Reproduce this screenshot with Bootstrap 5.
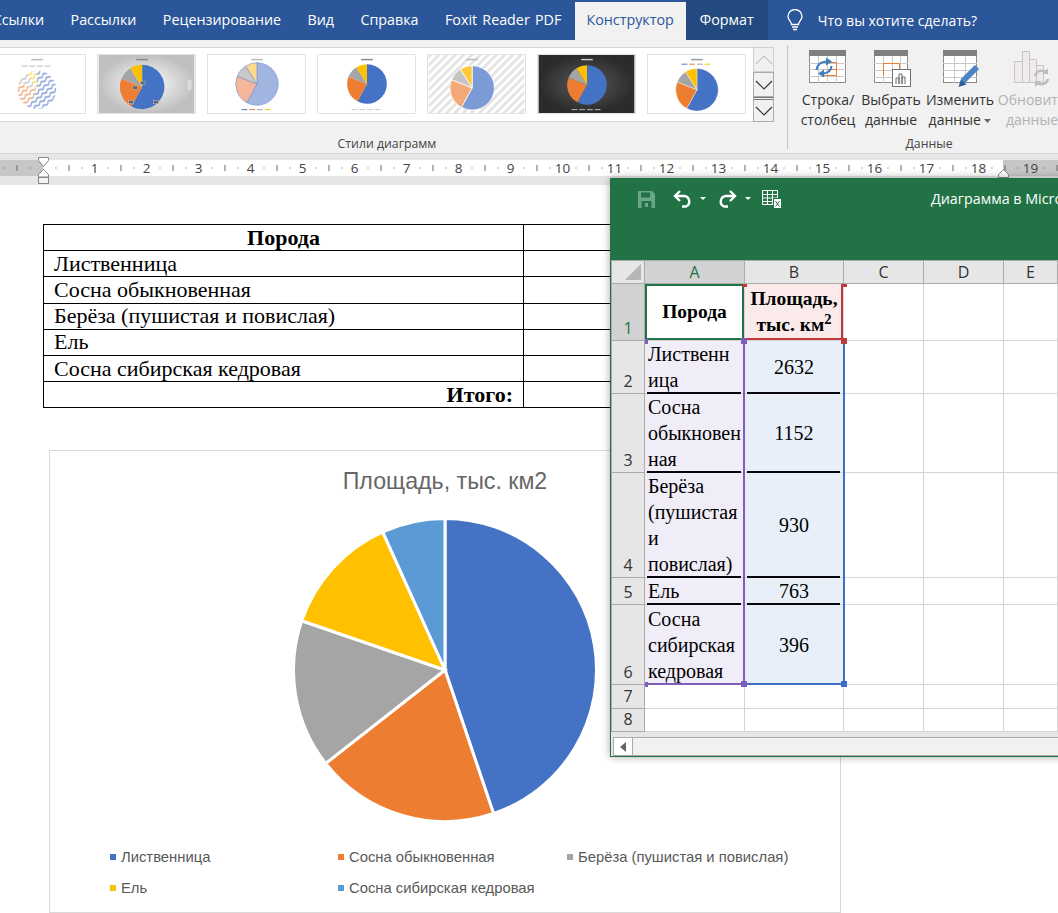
<!DOCTYPE html>
<html lang="ru">
<head>
    <meta charset="UTF-8">
    <title>Диаграмма</title>
    <link href="https://cdn.jsdelivr.net/npm/bootstrap@5.3.0/dist/css/bootstrap.min.css" rel="stylesheet">
    <style>
        body { background: #fff; font-family: "Open Sans", "Noto Sans", sans-serif; overflow: hidden; }
        .screen { position: relative; width: 1058px; height: 913px; overflow: hidden; }

        /* tabs */
        .tabbar { height: 40px; background: #2b579a; color: #fff; font-size: 14.3px; margin-left: -20.5px; width: 1079px; }
        .tab-item { padding: 0 13.2px; line-height: 40px; white-space: nowrap; }
        .tab-foxit { word-spacing: 1.5px; }
        .tab-active { background: #f1f1f1; color: #2b579a; padding: 0 12px; height: 38px; margin: 2px 0 0 0; line-height: 36px; }
        .tab-dark { background: #234a80; padding: 0 14px; }
        .tell-me { margin-left: 19px; gap: 15px; font-size: 14px; }

        /* ribbon */
        .ribbon { height: 114px; background: #f1f1f1; border-bottom: 1px solid #d4d4d4; }
        .gallery-wrap { width: 774px; position: relative; flex: none; }
        .gallery { height: 75px; margin: 7px 0 14px -13px; width: 766px; background: #fff; border-top: 1px solid #d4d4d4; border-bottom: 1px solid #d4d4d4; gap: 11px; }
        .thumb { width: 99px; height: 60px; flex: none; margin-top: 6px; border: 1px solid #e3e3e3; display: block; }
        .scroll-btns { position: absolute; left: 753px; top: 7px; width: 21px; height: 75px; }
        .scroll-btn { height: 25px; border: 1px solid #ababab; background: #f1f1f1; }
        .scroll-off { border-color: #d0d0d0; }
        .scroll-more { border-top: 3px double #777; }
        .group-label { font-size: 12.3px; color: #444; text-align: center; line-height: 16px; }
        .group-sep { width: 1px; background: #c6c6c6; margin: 5px 0 4px 13px; flex: none; }
        .data-group { padding-left: 9px; }
        .data-btn { text-align: center; font-size: 14px; line-height: 20px; color: #333; white-space: nowrap; flex: none; }
        .data-btn svg.btn-icon { display: block; margin: 10px auto 2px; }
        .btn-w1 { width: 62px; }
        .btn-w2 { width: 64px; }
        .btn-w3 { width: 74px; }
        .btn-w4 { width: 70px; }
        .data-off { color: #b1b1b1; }
        .data-caption { margin: 6px 0 0 -9px; width: 282px; }

        /* ruler */
        .ruler-band { height: 31px; background: #e6e6e6; }
        .ruler-band svg { display: block; font-family: "Open Sans", sans-serif; }

        /* document */
        .doc-table { width: 798px; margin: 39px 0 0 43px; border-collapse: collapse; table-layout: fixed; font-family: "Liberation Serif", serif; font-size: 22px; color: #000; }
        .doc-col { width: 480px; }
        .doc-table td { border: 1px solid #000; padding: 0 10px; height: 26.2px; line-height: 24px; }
        .chart-box { width: 792px; height: 463px; margin: 42px 0 0 49px; border: 1px solid #d9d9d9; font-family: "Liberation Sans", sans-serif; color: #595959; }
        .chart-title { font-size: 23.2px; line-height: 30px; padding-top: 15px; text-align: center; color: #666; }
        .pie-box { margin-top: 21px; }
        .pie-box svg { display: block; margin: 0 auto; }
        .legend-grid { display: grid; grid-template-columns: 228px 229px auto; row-gap: 11px; padding: 24px 0 0 60px; font-size: 14.8px; line-height: 20px; }
        .legend-key { width: 6px; height: 6px; display: inline-block; margin-right: 5px; vertical-align: 2px; }
        .key-1 { background: #4472c4; }
        .key-2 { background: #ed7d31; }
        .key-3 { background: #a5a5a5; }
        .key-4 { background: #ffc000; }
        .key-5 { background: #5b9bd5; }

        /* excel window */
        .excel-win { position: absolute; left: 610px; top: 178px; width: 470px; height: 579px; background: #e6e6e6; border: 1px solid #217346; box-shadow: 0 0 8px rgba(0,0,0,.35); }
        .excel-title { height: 81px; background: #217346; color: #fff; font-size: 14.3px; }
        .excel-qat { height: 40px; padding-left: 27px; }
        .qat-undo { margin-left: 18px; }
        .qat-redo { margin-left: 12px; }
        .qat-table { margin-left: 11px; }
        .excel-name { position: absolute; left: 320px; top: 9px; white-space: nowrap; }
        .sheet { border-collapse: collapse; table-layout: fixed; width: 446px; background: #fff; font-family: "Liberation Serif", serif; color: #000; font-size: 20px; line-height: 26px; white-space: nowrap; }
        .sheet td, .sheet th { border: 1px solid #d4d4d4; padding: 0 3px; }
        .sheet th { background: #e6e6e6; font-family: "Open Sans", sans-serif; font-weight: 400; color: #333; font-size: 16px; text-align: center; border-color: #ababab; line-height: 20px; }
        .col-h { width: 33px; }
        .col-a { width: 100px; }
        .col-b { width: 99px; }
        .col-std { width: 80px; }
        .col-e { width: 54px; }
        .row-head { height: 23px; }
        .row-1 { height: 57px; }
        .row-2 { height: 52px; }
        .row-3 { height: 79px; }
        .row-4 { height: 105px; }
        .row-5 { height: 27px; }
        .row-6 { height: 80px; }
        .row-7 { height: 24px; }
        .row-8 { height: 19px; }
        .sheet .corner { background: #e6e6e6; position: relative; }
        .corner-mark { position: absolute; right: 3px; bottom: 3px; width: 0; height: 0; border-style: solid; border-width: 0 0 16px 16px; border-color: transparent transparent #b5b5b5 transparent; }
        .sheet .col-on { background: #d2d2d2; color: #217346; }
        .sheet .row-on { background: #d2d2d2; color: #217346; }
        .sheet .row-num { vertical-align: bottom; padding: 0 0 2px; }
        .cell-name { background: #f1edf8; }
        .cell-val { background: #e8eff9; text-align: center; }
        .cell-head { text-align: center; font-weight: 700; font-size: 19.5px; position: relative; }
        .head-val { background: #faeae9; }
        .sel-green { box-shadow: inset 0 0 0 2px #217346; }
        .sel-red { box-shadow: inset -2px -2px 0 #c0393f; }
        .rule-under { position: relative; }
        .rule-under::after { content: ""; position: absolute; left: 2px; right: 3px; bottom: -1px; height: 2px; background: #06060c; }
        .sel-left, .sel-right { position: absolute; top: 162px; height: 344px; pointer-events: none; border-style: solid; border-width: 0 2px 2px 0; }
        .sel-left { left: 34px; width: 100px; border-color: #7f5dbb; }
        .sel-right { left: 134px; width: 100px; border-color: #3a6fc8; }
        .handle { position: absolute; width: 6px; height: 6px; }
        .h-purple { background: #7f5dbb; }
        .h-red { background: #c0393f; }
        .h-blue { background: #3a6fc8; }
        .h1 { left: 130px; top: 159px; }
        .h2 { left: 230px; top: 159px; }
        .h3 { left: 130px; top: 502px; }
        .h4 { left: 230px; top: 502px; }
        .h5 { left: 34px; top: 160px; width: 3px; height: 5px; }
        .h6 { left: 34px; top: 503px; width: 3px; height: 5px; }
        .h7 { left: 131px; top: 105px; height: 3px; width: 5px; }
        .h8 { left: 231px; top: 105px; height: 3px; width: 5px; }
        .h-scroll { height: 19px; margin: 5px 0 0 2px; background: #f1f1f1; border: 1px solid #ababab; }
        .h-scroll-btn { width: 19px; height: 17px; background: #fff; border-right: 1px solid #ababab; }
    </style>
</head>
<body>
<div class="screen">
    <!-- Вкладки -->
    <div class="tabbar d-flex">
        <div class="tab-item">Ссылки</div>
        <div class="tab-item">Рассылки</div>
        <div class="tab-item">Рецензирование</div>
        <div class="tab-item">Вид</div>
        <div class="tab-item">Справка</div>
        <div class="tab-item tab-foxit">Foxit Reader PDF</div>
        <div class="tab-item tab-active">Конструктор</div>
        <div class="tab-item tab-dark">Формат</div>
        <div class="d-flex align-items-center tell-me">
            <svg width="16" height="23" viewBox="0 0 16 23" fill="none" stroke="#fff" stroke-width="1.3"><path d="M4.500 15.500c0-3-3.500-4.500-3.500-8a7 7 0 0 1 14 0c0 3.500-3.500 5-3.500 8z"/><path d="M5 18h6M6 20.500h4"/></svg>
            <span>Что вы хотите сделать?</span>
        </div>
    </div>

    <!-- Лента -->
    <div class="ribbon d-flex">
        <div class="gallery-wrap">
            <div class="gallery d-flex" id="gallery"></div>
            <div class="scroll-btns">
                <div class="scroll-btn scroll-off d-flex align-items-center justify-content-center"><svg width="18" height="10" fill="none" stroke="#c4c4c4" stroke-width="1.2"><path d="M1 9l8-8 8 8"/></svg></div>
                <div class="scroll-btn d-flex align-items-center justify-content-center"><svg width="18" height="10" fill="none" stroke="#333" stroke-width="1.2"><path d="M1 1l8 8 8-8"/></svg></div>
                <div class="scroll-btn scroll-more d-flex align-items-center justify-content-center"><svg width="18" height="10" fill="none" stroke="#333" stroke-width="1.2"><path d="M1 1l8 8 8-8"/></svg></div>
            </div>
            <div class="group-label">Стили диаграмм</div>
        </div>
        <div class="group-sep"></div>
        <div class="data-group">
            <div class="d-flex">
                <div class="data-btn btn-w1">
                    <svg class="btn-icon" width="38" height="38" viewBox="0 0 38 38"><rect x=".5" y=".5" width="36" height="32" fill="#fff" stroke="#8a8a8a"/><rect width="37" height="6" fill="#7f7f7f"/><path d="M0 13.500h37M0 19.500h37M0 26.500h37M9.500 6v27M18.500 6v27M27.500 6v27" stroke="#c8c8c8" fill="none"/><path d="M13.500 12.500h14v13h-14M18.500 19.500h9" fill="none" stroke="#ed7d31"/><path d="M7.500 20c.5-5 4-8 9.500-8.500" fill="none" stroke="#3f7fbf" stroke-width="2.200"/><path d="M17 7.500l6 4-6 4z" fill="#3f7fbf"/><path d="M22.500 16c-.5 5-3.500 7-8 7.500" fill="none" stroke="#3f7fbf" stroke-width="2.200"/><path d="M15 19.500l-6 4 6 4z" fill="#3f7fbf"/></svg>
                    Строка/<br>столбец
                </div>
                <div class="data-btn btn-w2">
                    <svg class="btn-icon" width="40" height="38" viewBox="-3 0 40 38"><rect x=".5" y=".5" width="33" height="32" fill="#fff" stroke="#8a8a8a"/><rect width="34" height="6" fill="#7f7f7f"/><path d="M0 13.500h34M0 20.500h34M0 27.500h34M9.500 6v27M18.500 6v27M26.500 6v27" stroke="#c8c8c8" fill="none"/><path d="M9.500 25.500v-12h16v12" fill="none" stroke="#ed7d31"/><rect x="18.500" y="19.500" width="18" height="17" fill="#fff" stroke="#707070"/><path d="M22 34v-6h3v6M25 34v-10h3v10M28 34v-7h3v7" fill="#f4f4f4" stroke="#707070"/></svg>
                    Выбрать<br>данные
                </div>
                <div class="data-btn btn-w3">
                    <svg class="btn-icon" width="40" height="38" viewBox="-3 0 40 38"><rect x=".5" y=".5" width="33" height="32" fill="#fff" stroke="#8a8a8a"/><rect width="34" height="6" fill="#7f7f7f"/><path d="M0 13.500h34M0 20.500h34M0 27.500h34M11.500 6v27M22.500 6v27" stroke="#c8c8c8" fill="none"/><path d="M20 31L34 17" stroke="#4a86c5" stroke-width="6"/><path d="M15.500 37l2.500-8 5.500 5.500z" fill="#2e5f99"/></svg>
                    Изменить<br>данные <svg width="7" height="4"><path d="M0 0h7L3.500 4z" fill="#666"/></svg>
                </div>
                <div class="data-btn btn-w4 data-off">
                    <svg class="btn-icon" width="38" height="38" viewBox="0 0 38 38" fill="#efeaee" stroke="#c8c3c8"><path d="M1.500 11.500h8v21h-8zM9.500 1.500h7v31h-7zM16.500 9.500h7v23h-7zM23.500 15.500h7v17h-7z"/><path d="M22 26a7 7 0 0 1 12-3M35 29a7 7 0 0 1-12 3" fill="none" stroke="#bdbdbd" stroke-width="2.500"/><path d="M35 18v6h-6zM22 37v-6h6z" fill="#bdbdbd" stroke="none"/></svg>
                    Обновить<br>данные
                </div>
            </div>
            <div class="group-label data-caption">Данные</div>
        </div>
    </div>

    <!-- Линейка -->
    <div class="ruler-band"><svg id="ruler" width="1058" height="31"></svg></div>

    <!-- Документ -->
    <table class="doc-table">
        <colgroup><col class="doc-col"><col></colgroup>
        <tr><td class="text-center fw-bold">Порода</td><td></td></tr>
        <tr><td>Лиственница</td><td></td></tr>
        <tr><td>Сосна обыкновенная</td><td></td></tr>
        <tr><td>Берёза (пушистая и повислая)</td><td></td></tr>
        <tr><td>Ель</td><td></td></tr>
        <tr><td>Сосна сибирская кедровая</td><td></td></tr>
        <tr><td class="text-end fw-bold">Итого:</td><td></td></tr>
    </table>

    <div class="chart-box">
        <div class="chart-title">Площадь, тыс. км2</div>
        <div class="pie-box"><svg id="mainPie" width="306" height="306" viewBox="-153 -153 306 306"></svg></div>
        <div class="legend-grid">
            <div><span class="legend-key key-1"></span>Лиственница</div>
            <div><span class="legend-key key-2"></span>Сосна обыкновенная</div>
            <div><span class="legend-key key-3"></span>Берёза (пушистая и повислая)</div>
            <div><span class="legend-key key-4"></span>Ель</div>
            <div><span class="legend-key key-5"></span>Сосна сибирская кедровая</div>
        </div>
    </div>

    <!-- Окно Excel -->
    <div class="excel-win">
        <div class="excel-title position-relative">
            <div class="excel-qat d-flex align-items-center">
                <svg width="17" height="17" viewBox="0 0 17 17"><path d="M0 0h14l3 3v14H0z" fill="#6da78a"/><path d="M3 1.500h9v5H3zM3.500 10h10v7h-10z" fill="#217346"/><path d="M7 12h3v4H7z" fill="#6da78a"/></svg>
                <div class="qat-undo d-flex align-items-center gap-2">
                    <svg width="19" height="18" viewBox="0 0 19 18" fill="none" stroke="#fff" stroke-width="2.400"><path d="M7 1L2 6l5 5"/><path d="M2 6h9a5.500 5.500 0 0 1 2 10.500H9"/></svg>
                    <svg width="6" height="4"><path d="M0 0h6L3 3z" fill="#fff"/></svg>
                </div>
                <div class="qat-redo d-flex align-items-center gap-2">
                    <svg width="19" height="18" viewBox="0 0 19 18" fill="none" stroke="#fff" stroke-width="2.400"><path d="M12 1l5 5-5 5"/><path d="M17 6H8a5.500 5.500 0 0 0-2 10.500h4"/></svg>
                    <svg width="6" height="4"><path d="M0 0h6L3 3z" fill="#fff"/></svg>
                </div>
                <svg class="qat-table" width="20" height="19" viewBox="0 0 20 19" fill="none" stroke="#fff"><path d="M.5 .5h15v14H.5zM.5 4.500h15M.5 8h15M.5 11.500h15M5.500 .5v14M10.500 .5v14"/><rect x="11.500" y="8.500" width="8" height="10" fill="#fff" stroke="#217346"/><path d="M13.500 11l4 5.500M17.500 11l-4 5.500" stroke="#217346"/></svg>
            </div>
            <div class="excel-name">Диаграмма в Microsoft Excel</div>
        </div>
        <table class="sheet">
            <colgroup><col class="col-h"><col class="col-a"><col class="col-b"><col class="col-std"><col class="col-std"><col class="col-e"></colgroup>
            <tr class="row-head"><th class="corner"><span class="corner-mark"></span></th><th class="col-on">A</th><th>B</th><th>C</th><th>D</th><th>E</th></tr>
            <tr class="row-1"><th class="row-num row-on">1</th><td class="cell-head sel-green">Порода</td><td class="cell-head head-val sel-red">Площадь,<br>тыс. км<sup>2</sup></td><td></td><td></td><td></td></tr>
            <tr class="row-2"><th class="row-num">2</th><td class="cell-name rule-under">Лиственн<br>ица</td><td class="cell-val rule-under">2632</td><td></td><td></td><td></td></tr>
            <tr class="row-3"><th class="row-num">3</th><td class="cell-name rule-under">Сосна<br>обыкновен<br>ная</td><td class="cell-val rule-under">1152</td><td></td><td></td><td></td></tr>
            <tr class="row-4"><th class="row-num">4</th><td class="cell-name rule-under">Берёза<br>(пушистая<br>и<br>повислая)</td><td class="cell-val rule-under">930</td><td></td><td></td><td></td></tr>
            <tr class="row-5"><th class="row-num">5</th><td class="cell-name rule-under">Ель</td><td class="cell-val rule-under">763</td><td></td><td></td><td></td></tr>
            <tr class="row-6"><th class="row-num">6</th><td class="cell-name">Сосна<br>сибирская<br>кедровая</td><td class="cell-val">396</td><td></td><td></td><td></td></tr>
            <tr class="row-7"><th class="row-num">7</th><td></td><td></td><td></td><td></td><td></td></tr>
            <tr class="row-8"><th class="row-num">8</th><td></td><td></td><td></td><td></td><td></td></tr>
        </table>
        <div class="sel-left"></div>
        <div class="sel-right"></div>
        <div class="handle h-purple h1"></div>
        <div class="handle h-red h2"></div>
        <div class="handle h-purple h3"></div>
        <div class="handle h-blue h4"></div>
        <div class="handle h-purple h5"></div>
        <div class="handle h-purple h6"></div>
        <div class="handle h-red h7"></div>
        <div class="handle h-red h8"></div>
        <div class="h-scroll"><div class="h-scroll-btn d-flex align-items-center justify-content-center"><svg width="6" height="10"><path d="M6 0v10L0 5z" fill="#666"/></svg></div></div>
    </div>
</div>

<script>
    // Построение секторов круговой диаграммы
    function piePaths(values, colors, r, stroke, strokeWidth) {
        const total = values.reduce((a, b) => a + b, 0);
        let angle = 0;
        let out = '';
        values.forEach((v, i) => {
            const next = angle + v / total * Math.PI * 2;
            const x1 = r * Math.sin(angle), y1 = -r * Math.cos(angle);
            const x2 = r * Math.sin(next), y2 = -r * Math.cos(next);
            const large = next - angle > Math.PI ? 1 : 0;
            out += `<path d="M0 0L${x1.toFixed(2)} ${y1.toFixed(2)}A${r} ${r} 0 ${large} 1 ${x2.toFixed(2)} ${y2.toFixed(2)}Z" fill="${colors[i]}" stroke="${stroke}" stroke-width="${strokeWidth}"/>`;
            angle = next;
        });
        return out;
    }

    document.getElementById('mainPie').innerHTML = piePaths(
        [2632, 1152, 930, 763, 396],
        ['#4472c4', '#ed7d31', '#a5a5a5', '#ffc000', '#5b9bd5'], 151.5, '#fff', 3);

    // Миниатюры стилей
    const base = ['#4472c4', '#ed7d31', '#a5a5a5', '#ffc000'];
    const dots = (y, fill) => [0, 1, 2, 3].map(i => `<rect x="${34 + i * 8}" y="${y}" width="6" height="1" fill="${fill || base[i]}"/>`).join('');
    const boxes = [[12, 14], [-2, -6], [-14, 14], [-10, -1]].map(b => `<rect x="${b[0]}" y="${b[1]}" width="5" height="3.500" fill="#666" stroke="#ddd" stroke-width=".4"/>`).join('');
    const thumbs = [
        { bg: '#fff', colors: ['url(#waveBlue)', 'url(#waveOrange)', 'url(#waveGrey)', 'url(#waveYellow)'], r: 20, cx: 50, cy: 36, title: '#bbb', extra: dots(11, '#bbb') },
        { bg: 'url(#gradGrey)', colors: base, r: 23, cx: 45, cy: 33, title: '#888', inner: boxes, extra: '<rect x="92" y="26" width="4" height="10" fill="#ddd"/>' },
        { bg: '#fff', colors: ['#a2b5e0', '#f5b69b', '#c9c9c9', '#ffd98a'], stroke: '#6f8fd0', sw: .6, r: 22, cx: 50, cy: 30, title: '#bbb', extra: dots(56) },
        { bg: '#fff', colors: base, r: 20.500, cx: 50, cy: 30, title: '#888', extra: dots(56, '#ccc') },
        { bg: 'url(#hatch)', colors: ['#7b9bd6', '#f3a878', '#c4c4c4', '#ffc93c'], stroke: '#fff', sw: .8, r: 23, cx: 45, cy: 34, title: '#bbb', extra: '' },
        { bg: 'url(#gradDark)', colors: base, r: 20.500, cx: 50, cy: 31, title: '#ccc', extra: dots(56, '#bbb') },
        { bg: '#fff', colors: base, stroke: '#fff', sw: .4, r: 22, cx: 50, cy: 36, title: '#999', extra: dots(9) }
    ];
    const wave = (id, c) => `<pattern id="${id}" width="7" height="5" patternUnits="userSpaceOnUse" patternTransform="rotate(-40)"><rect width="7" height="5" fill="#fff"/><path d="M0 2.500q1.750-2 3.500 0t3.500 0" fill="none" stroke="${c}" stroke-width="1.600"/></pattern>`;
    const defs = `<defs>
        <radialGradient id="gradGrey"><stop offset="0" stop-color="#fff"/><stop offset="1" stop-color="#c0c0c0"/></radialGradient>
        <radialGradient id="gradDark"><stop offset="0" stop-color="#5a5a5a"/><stop offset="1" stop-color="#2b2b2b"/></radialGradient>
        <pattern id="hatch" width="6" height="6" patternUnits="userSpaceOnUse" patternTransform="rotate(45)"><rect width="6" height="6" fill="#fff"/><rect width="3" height="6" fill="#e4e4e4"/></pattern>
        ${wave('waveBlue', '#7f9ed8')}${wave('waveOrange', '#f2a878')}${wave('waveGrey', '#c4c4c4')}${wave('waveYellow', '#ffd45e')}
    </defs>`;
    document.getElementById('gallery').innerHTML = thumbs.map((t, i) =>
        `<svg class="thumb" viewBox="0 0 99 60">${i === 0 ? defs : ''}<rect width="99" height="60" fill="${t.bg}"/>` +
        `<rect x="${t.cx - 6}" y="4" width="12" height="1.500" fill="${t.title}"/>${t.extra}` +
        `<g transform="translate(${t.cx} ${t.cy})">${piePaths([58, 23, 10, 9], t.colors, t.r, t.stroke || 'none', t.sw || 0)}${t.inner || ''}</g></svg>`
    ).join('');

    // Линейка
    const zero = 42.5;
    let ruler = '<rect y="6" width="1058" height="16" fill="#fff"/>' +
        '<rect y="6" width="43" height="16" fill="#c6c6c6"/><rect x="1003" y="6" width="55" height="16" fill="#c6c6c6"/>';
    for (let i = -3; i < 81; i++) {
        if (i % 4 === 0) continue;
        const x = zero + i * 13;
        ruler += i % 2 === 0
            ? `<rect x="${x.toFixed(1)}" y="11" width="1" height="6" fill="#666"/>`
            : `<rect x="${x.toFixed(1)}" y="13.500" width="1" height="1" fill="#666"/>`;
    }
    for (let i = 1; i <= 19; i++) {
        ruler += `<text x="${zero + i * 52}" y="19" text-anchor="middle" font-size="13.500" fill="#444">${i}</text>`;
    }
    ruler += '<path d="M38.500 3.500h10v3l-5 6-5-6zM43.500 15.500l5 5v2.500h-10v-2.500z" fill="#fff" stroke="#888"/><rect x="38.500" y="23.500" width="10" height="6" fill="#f3f3f3" stroke="#888"/>';
    ruler += '<path d="M998.500 23.500v-3l5-5 5 5v3z" fill="#fff" stroke="#888"/>';
    document.getElementById('ruler').innerHTML = ruler;
</script>
<script src="https://cdn.jsdelivr.net/npm/bootstrap@5.3.0/dist/js/bootstrap.bundle.min.js"></script>
</body>
</html>
